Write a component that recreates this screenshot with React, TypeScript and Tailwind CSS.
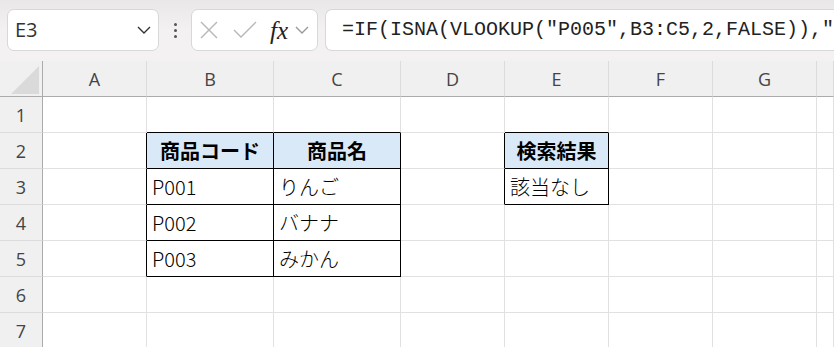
import React from 'react';

const cols = ['A', 'B', 'C', 'D', 'E', 'F', 'G', ''];

type Cell = { text?: string; head?: boolean; r?: boolean; b?: boolean };

// black borders: r = right edge black, b = bottom edge black
const sheet: Record<number, Record<string, Cell>> = {
  1: { B: { b: true }, C: { b: true }, E: { b: true } },
  2: {
    A: { r: true },
    B: { text: '商品コード', head: true, r: true, b: true },
    C: { text: '商品名', head: true, r: true, b: true },
    D: { r: true },
    E: { text: '検索結果', head: true, r: true, b: true },
  },
  3: {
    A: { r: true },
    B: { text: 'P001', r: true, b: true },
    C: { text: 'りんご', r: true, b: true },
    D: { r: true },
    E: { text: '該当なし', r: true, b: true },
  },
  4: {
    A: { r: true },
    B: { text: 'P002', r: true, b: true },
    C: { text: 'バナナ', r: true, b: true },
  },
  5: {
    A: { r: true },
    B: { text: 'P003', r: true, b: true },
    C: { text: 'みかん', r: true, b: true },
  },
  6: {},
  7: {},
};

function Chevron({ className }: { className: string }) {
  return (
    <svg viewBox="0 0 14 8" className={className} fill="none" stroke="currentColor" strokeWidth="1.4">
      <polyline points="1,1 7,7 13,1" />
    </svg>
  );
}

export default function App() {
  return (
    <div className="w-[834px] h-[347px] overflow-hidden bg-white" style={{ fontFamily: '"Open Sans", "Noto Sans CJK JP", sans-serif' }}>
      {/* Toolbar */}
      <div className="h-[61px] bg-gradient-to-b from-[#e9e7e7] via-[#f3f1f1] to-[#f3f1f1] flex items-start pt-[9px] pl-[7px]">
        <div className="w-[152px] h-[42px] rounded-[7px] border border-[#d8d8d8] bg-white flex items-center justify-between pl-[7px] pr-[7px]">
          <span className="text-[20px] text-[#333] leading-none">E3</span>
          <Chevron className="w-[14px] h-[8px] text-[#333]" />
        </div>
        <div className="w-[32px] h-[42px] flex flex-col items-center justify-center gap-[3px]">
          <span className="w-[3px] h-[3px] rounded-full bg-[#555]" />
          <span className="w-[3px] h-[3px] rounded-full bg-[#555]" />
          <span className="w-[3px] h-[3px] rounded-full bg-[#555]" />
        </div>
        <div className="w-[127px] h-[42px] rounded-[7px] border border-[#d8d8d8] bg-white flex items-center pl-[8px]">
          <svg viewBox="0 0 18 18" className="w-[18px] h-[18px]" fill="none" stroke="#b8b8b8" strokeWidth="1.4">
            <line x1="1" y1="1" x2="17" y2="17" />
            <line x1="17" y1="1" x2="1" y2="17" />
          </svg>
          <svg viewBox="0 0 24 18" className="w-[24px] h-[18px] ml-[15px]" fill="none" stroke="#b8b8b8" strokeWidth="1.4">
            <polyline points="1,9 8,16 23,1" />
          </svg>
          <span className="ml-[13px] text-[25px] italic text-[#222] leading-none" style={{ fontFamily: '"Liberation Serif", serif' }}>
            fx
          </span>
          <Chevron className="ml-[7px] w-[14px] h-[8px] text-[#999]" />
        </div>
        <div className="ml-[7px] flex-1 h-[42px] rounded-l-[7px] border border-r-0 border-[#d8d8d8] bg-white flex items-center pl-[16px] overflow-hidden">
          <span className="text-[20px] text-[#222] whitespace-nowrap leading-none" style={{ fontFamily: '"Liberation Mono", monospace' }}>
            =IF(ISNA(VLOOKUP("P005",B3:C5,2,FALSE)),"
          </span>
        </div>
      </div>

      {/* Grid */}
      <div className="grid grid-cols-[43px_104px_127px_127px_104px_104px_104px_104px_1fr] auto-rows-[36px]">
        <div className="bg-[#f0f0f0] border-r border-b border-[#ababab] relative">
          <svg viewBox="0 0 28 28" className="absolute left-[11px] top-[5px] w-[28px] h-[28px]">
            <polygon points="28,0 28,28 0,28" fill="#dadada" />
          </svg>
        </div>
        {cols.map((c, i) => (
          <div
            key={i}
            className="bg-[#f0f0f0] border-r border-r-[#dcdcdc] border-b border-b-[#ababab] flex items-center justify-center text-[18px] text-[#444] leading-none"
          >
            {c}
          </div>
        ))}
        {[1, 2, 3, 4, 5, 6, 7].map((row) => (
          <React.Fragment key={row}>
            <div className="bg-[#f0f0f0] border-r border-r-[#ababab] border-b border-b-[#dcdcdc] flex items-center justify-center text-[18px] text-[#444] leading-none">
              {row}
            </div>
            {cols.map((c, i) => {
              const cell: Cell = sheet[row][c] || {};
              return (
                <div
                  key={i}
                  className={
                    'border-r border-b flex items-center text-[20px] text-black leading-none pt-[1px] ' +
                    (cell.r ? 'border-r-black ' : 'border-r-[#e1e1e1] ') +
                    (cell.b ? 'border-b-black ' : 'border-b-[#e1e1e1] ') +
                    (cell.head ? 'bg-[#dae9f8] font-bold justify-center ' : 'pl-[5px] font-light ')
                  }
                  style={{ fontFamily: '"Noto Sans CJK JP", sans-serif' }}
                >
                  {cell.text}
                </div>
              );
            })}
          </React.Fragment>
        ))}
      </div>
    </div>
  );
}
